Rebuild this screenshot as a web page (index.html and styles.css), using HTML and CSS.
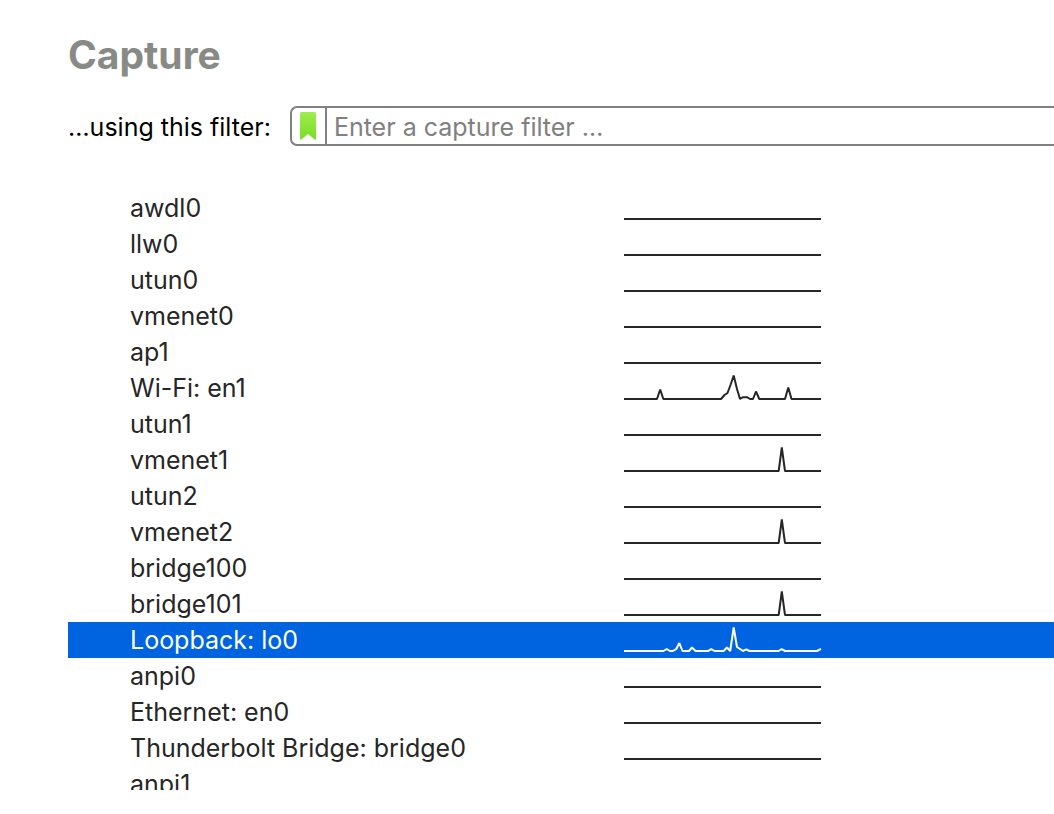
FILE: index.html
```html
<!DOCTYPE html>
<html lang="en">
<head>
<meta charset="utf-8">
<title>Capture</title>
<link rel="stylesheet" href="styles.css">
</head>
<body>
<main class="capture">
  <h1 class="title">Capture</h1>
  <form class="filter">
    <label class="filter-label" for="filter">…using this filter:</label>
    <div class="filter-box">
      <button class="bookmark" type="button" aria-label="Filter bookmarks">
        <svg width="16" height="28" viewBox="0 0 16 28">
          <defs><linearGradient id="leaf" x1="0" y1="0" x2="0" y2="1"><stop offset="0" stop-color="#a0ec50"/><stop offset="1" stop-color="#78dc22"/></linearGradient></defs>
          <path fill="url(#leaf)" d="M1.500 0h13Q16 0 16 1.500V27q0 1.500-1.200.500L8 22 1.200 27.500Q0 28.500 0 27V1.500Q0 0 1.500 0z"/>
        </svg>
      </button>
      <input class="filter-input" id="filter" type="text" placeholder="Enter a capture filter …">
    </div>
  </form>
  <div class="list">
    <table class="interfaces">
      <tbody>
        <tr><td class="name">awdl0</td><td class="traffic"><svg class="spark" viewBox="0 0 198 36"><path d="M0 29H197"/></svg></td></tr>
        <tr><td class="name">llw0</td><td class="traffic"><svg class="spark" viewBox="0 0 198 36"><path d="M0 29H197"/></svg></td></tr>
        <tr><td class="name">utun0</td><td class="traffic"><svg class="spark" viewBox="0 0 198 36"><path d="M0 29H197"/></svg></td></tr>
        <tr><td class="name">vmenet0</td><td class="traffic"><svg class="spark" viewBox="0 0 198 36"><path d="M0 29H197"/></svg></td></tr>
        <tr><td class="name">ap1</td><td class="traffic"><svg class="spark" viewBox="0 0 198 36"><path d="M0 29H197"/></svg></td></tr>
        <tr><td class="name">Wi-Fi: en1</td><td class="traffic"><svg class="spark" viewBox="0 0 198 36"><path d="M0 29H33L36.200 19.500 39.300 29H97L100.500 25 103.500 23 106.500 15 109.700 5.500 113 19 116 29 119 27.200H123L126 29H129L132 21.500 135.300 29H161L164.300 17.500 167.500 29H197"/></svg></td></tr>
        <tr><td class="name">utun1</td><td class="traffic"><svg class="spark" viewBox="0 0 198 36"><path d="M0 29H197"/></svg></td></tr>
        <tr><td class="name">vmenet1</td><td class="traffic"><svg class="spark" viewBox="0 0 198 36"><path d="M0 29H154.700L157.800 5.500 161 29H197"/></svg></td></tr>
        <tr><td class="name">utun2</td><td class="traffic"><svg class="spark" viewBox="0 0 198 36"><path d="M0 29H197"/></svg></td></tr>
        <tr><td class="name">vmenet2</td><td class="traffic"><svg class="spark" viewBox="0 0 198 36"><path d="M0 29H154.700L157.800 5.500 161 29H197"/></svg></td></tr>
        <tr><td class="name">bridge100</td><td class="traffic"><svg class="spark" viewBox="0 0 198 36"><path d="M0 29H197"/></svg></td></tr>
        <tr><td class="name">bridge101</td><td class="traffic"><svg class="spark" viewBox="0 0 198 36"><path d="M0 29H154.700L157.800 5.500 161 29H197"/></svg></td></tr>
        <tr class="selected"><td class="name">Loopback: lo0</td><td class="traffic"><svg class="spark" viewBox="0 0 198 36"><path d="M0 29H39.500L42.700 27 46 29H49L52.300 27 55.300 21 58.500 29H65L68 25.500 71.500 29H84L87.300 27.200 90.500 29H99.500L103 25.500 106.200 29 109.700 5.500 113 25 116 27 119 29 122.300 27.300 125.500 29H154.500L157.700 27.200 161 29H193L197 26.800"/></svg></td></tr>
        <tr><td class="name">anpi0</td><td class="traffic"><svg class="spark" viewBox="0 0 198 36"><path d="M0 29H197"/></svg></td></tr>
        <tr><td class="name">Ethernet: en0</td><td class="traffic"><svg class="spark" viewBox="0 0 198 36"><path d="M0 29H197"/></svg></td></tr>
        <tr><td class="name">Thunderbolt Bridge: bridge0</td><td class="traffic"><svg class="spark" viewBox="0 0 198 36"><path d="M0 29H197"/></svg></td></tr>
        <tr><td class="name">anpi1</td><td class="traffic"><svg class="spark" viewBox="0 0 198 36"><path d="M0 29H197"/></svg></td></tr>
      </tbody>
    </table>
  </div>
</main>
</body>
</html>
```
FILE: styles.css
```css
* { box-sizing: border-box; }

body {
  margin: 0;
  background: #fff;
  color: #262626;
  font: 25px/36px Inter, "Liberation Sans", sans-serif;
}

.capture {
  display: flex;
  flex-direction: column;
  height: 100vh;
  padding: 32px 0 24px 68px;
}

.title {
  flex: none;
  margin: 0 0 28px;
  color: #888a85;
  font-size: 39px;
  line-height: 46px;
  font-weight: 700;
}

.filter {
  display: flex;
  flex: none;
  align-items: center;
  gap: 19px;
  margin-bottom: 44px;
}

.filter-label {
  padding-top: 2px;
  color: #000;
  white-space: nowrap;
}

.filter-box {
  display: flex;
  flex: 1;
  height: 40px;
  border: 2px solid #808080;
  border-right: 0;
  border-radius: 7px 0 0 7px;
}

.bookmark {
  display: flex;
  align-items: center;
  justify-content: center;
  width: 35px;
  margin: 0;
  padding: 0;
  border: 0;
  border-right: 2px solid #808080;
  background: none;
}

.filter-input {
  flex: 1;
  min-width: 0;
  padding: 2px 7px 0;
  border: 0;
  outline: 0;
  background: none;
  color: #000;
  font: inherit;
}

.filter-input::placeholder {
  color: #808080;
  opacity: 1;
}

.list {
  flex: 1;
  min-height: 0;
  overflow: hidden;
}

.interfaces {
  width: 100%;
  border-collapse: collapse;
}

.interfaces td {
  height: 36px;
  padding: 0;
}

.interfaces .name {
  width: 556px;
  padding-left: 62px;
  white-space: nowrap;
}

.spark {
  display: block;
  width: 198px;
  height: 36px;
  fill: none;
  stroke: currentColor;
  stroke-width: 2;
  stroke-linejoin: bevel;
}

.selected {
  background: #0064e1;
  color: #fff;
}
```
